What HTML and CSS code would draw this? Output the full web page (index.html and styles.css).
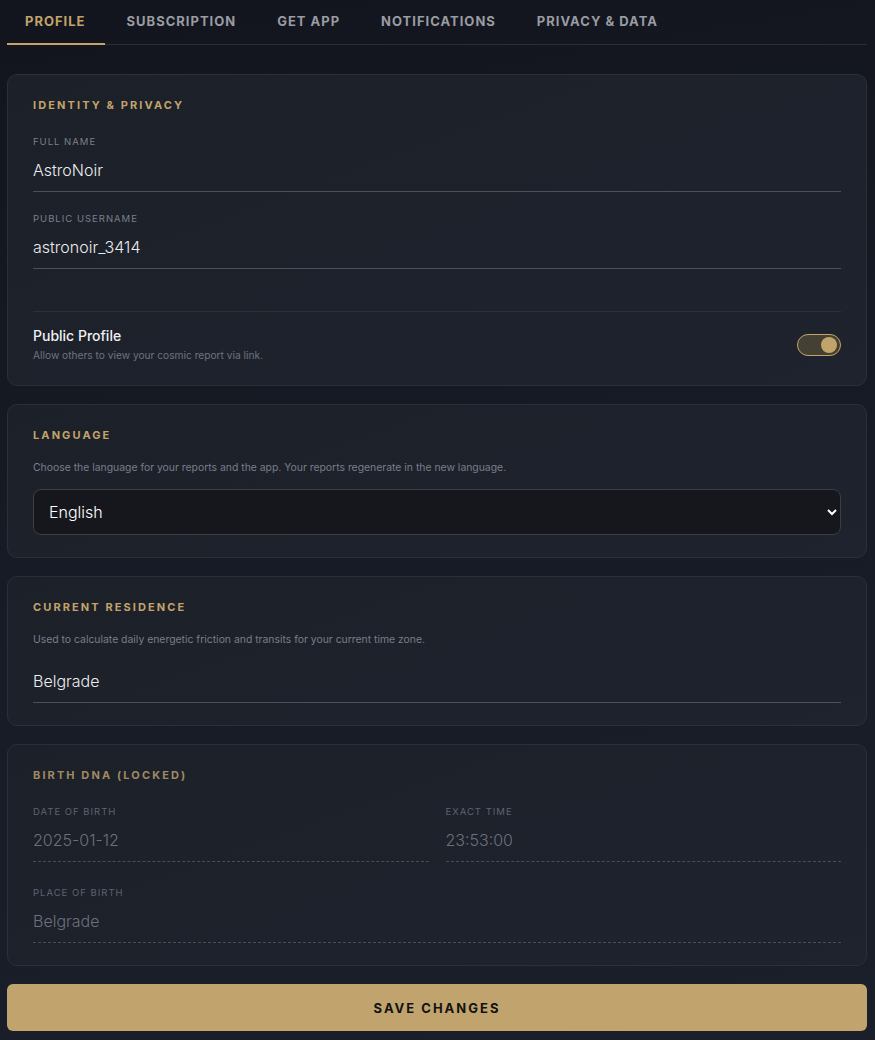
FILE: index.html
```html
<!DOCTYPE html>
<html>
<head>
    <title>Settings</title>
    <link rel="stylesheet" href="styles.css">
</head>
<body>
    <div class="page">
        <nav class="tabs">
            <a class="tab active">PROFILE</a>
            <a class="tab">SUBSCRIPTION</a>
            <a class="tab">GET APP</a>
            <a class="tab">NOTIFICATIONS</a>
            <a class="tab">PRIVACY &amp; DATA</a>
        </nav>

        <section class="card">
            <h3 class="card-title">IDENTITY &amp; PRIVACY</h3>
            <div class="field">
                <label>FULL NAME</label>
                <input type="text" class="line-input" value="AstroNoir">
            </div>
            <div class="field">
                <label>PUBLIC USERNAME</label>
                <input type="text" class="line-input" value="astronoir_3414">
            </div>
            <div class="toggle-row">
                <div>
                    <div class="toggle-title">Public Profile</div>
                    <div class="toggle-desc">Allow others to view your cosmic report via link.</div>
                </div>
                <div class="switch on"><span class="knob"></span></div>
            </div>
        </section>

        <section class="card">
            <h3 class="card-title">LANGUAGE</h3>
            <p class="card-desc">Choose the language for your reports and the app. Your reports regenerate in the new language.</p>
            <select class="select">
                <option>English</option>
                <option>Srpski</option>
                <option>Deutsch</option>
            </select>
        </section>

        <section class="card">
            <h3 class="card-title">CURRENT RESIDENCE</h3>
            <p class="card-desc">Used to calculate daily energetic friction and transits for your current time zone.</p>
            <input type="text" class="line-input" value="Belgrade">
        </section>

        <section class="card locked">
            <h3 class="card-title">BIRTH DNA (LOCKED)</h3>
            <div class="grid-2">
                <div class="field">
                    <label>DATE OF BIRTH</label>
                    <input type="text" class="line-input" value="2025-01-12" disabled>
                </div>
                <div class="field">
                    <label>EXACT TIME</label>
                    <input type="text" class="line-input" value="23:53:00" disabled>
                </div>
            </div>
            <div class="field">
                <label>PLACE OF BIRTH</label>
                <input type="text" class="line-input" value="Belgrade" disabled>
            </div>
        </section>

        <button class="save-btn">SAVE CHANGES</button>
    </div>
</body>
</html>
```

FILE: styles.css
```css
html {
    background: #151922;
}
body {
    margin: 0;
    min-height: 1040px;
    font-family: Inter, "Noto Sans", sans-serif;
    background: linear-gradient(170deg, #12151d 0%, #171b25 50%, #1a1f2a 100%);
    color: #e6e7ea;
}
.page {
    padding: 0 8px 0 7px;
}
.tabs {
    display: flex;
    gap: 4px;
    border-bottom: 1px solid #2a2e37;
    margin-bottom: 29px;
}
.tab {
    padding: 14px 19px 14px 18px;
    font-size: 13px;
    font-weight: 700;
    letter-spacing: 1px;
    line-height: 15px;
    color: #9a9ca3;
    border-bottom: 2px solid transparent;
    margin-bottom: -1px;
    cursor: pointer;
}
.tab.active {
    color: #c2a46b;
    border-bottom-color: #c2a46b;
}
.card {
    background: linear-gradient(160deg, #1c2029 0%, #1f232d 100%);
    border: 1px solid #2b2f39;
    border-radius: 10px;
    padding: 23px 25px 22px 25px;
    margin-bottom: 18px;
}
.card-title {
    margin: 0 0 19px 0;
    font-size: 11px;
    line-height: 14px;
    font-weight: 700;
    letter-spacing: 2.1px;
    color: #c2a46b;
}
.card-desc {
    margin: 0 0 14px 0;
    font-size: 10.4px;
    line-height: 14px;
    color: #7a7e89;
}
.field {
    padding-top: 5px;
}
.field + .field {
    margin-top: 16px;
}
.field label {
    display: block;
    font-size: 9.5px;
    line-height: 12px;
    letter-spacing: 1px;
    color: #7b7f8a;
    margin-bottom: 6px;
}
.line-input {
    display: block;
    width: 100%;
    box-sizing: border-box;
    padding: 7px 0 11px 0;
    border: none;
    border-bottom: 1px solid #4b4f59;
    background: transparent;
    color: #ececee;
    font-family: inherit;
    font-size: 16px;
    font-weight: 300;
    line-height: 19px;
    outline: none;
}
.card-desc + .line-input {
    margin-top: 18px;
}
.toggle-row {
    display: flex;
    justify-content: space-between;
    align-items: center;
    margin-top: 42px;
    padding: 15px 0 1px 0;
    border-top: 1px solid #2c3039;
}
.toggle-title {
    font-size: 14px;
    line-height: 17px;
    font-weight: 500;
    color: #f0f0f2;
}
.toggle-desc {
    margin-top: 5px;
    font-size: 10.2px;
    line-height: 13px;
    color: #6e7380;
}
.switch {
    box-sizing: content-box;
    width: 36px;
    height: 20px;
    padding: 0 3px;
    border: 1px solid #c2a46b;
    border-radius: 12px;
    background: #454034;
    display: flex;
    align-items: center;
    justify-content: flex-end;
}
.knob {
    width: 16px;
    height: 16px;
    border-radius: 50%;
    background: #c2a46b;
}
.select {
    display: block;
    width: 100%;
    height: 46px;
    padding: 0 10px 0 11px;
    background: #16171c;
    color: #fff;
    border: 1px solid #3b3e47;
    border-radius: 8px;
    font-family: inherit;
    font-size: 16px;
    font-weight: 300;
}
.locked .card-title {
    color: #a08961;
}
.locked .line-input {
    color: #6c707b;
    border-bottom: 1px dashed #494d57;
}
.locked .field label {
    color: #5f6370;
}
.grid-2 {
    display: grid;
    grid-template-columns: 1fr 1fr;
    column-gap: 17px;
}
.grid-2 .field + .field {
    margin-top: 0;
}
.grid-2 + .field {
    margin-top: 20px;
}
.save-btn {
    display: block;
    width: 100%;
    height: 47px;
    border: none;
    border-radius: 6px;
    background: #c1a46d;
    color: #121212;
    font-family: inherit;
    font-size: 13px;
    font-weight: 700;
    letter-spacing: 2px;
    cursor: pointer;
}
```
